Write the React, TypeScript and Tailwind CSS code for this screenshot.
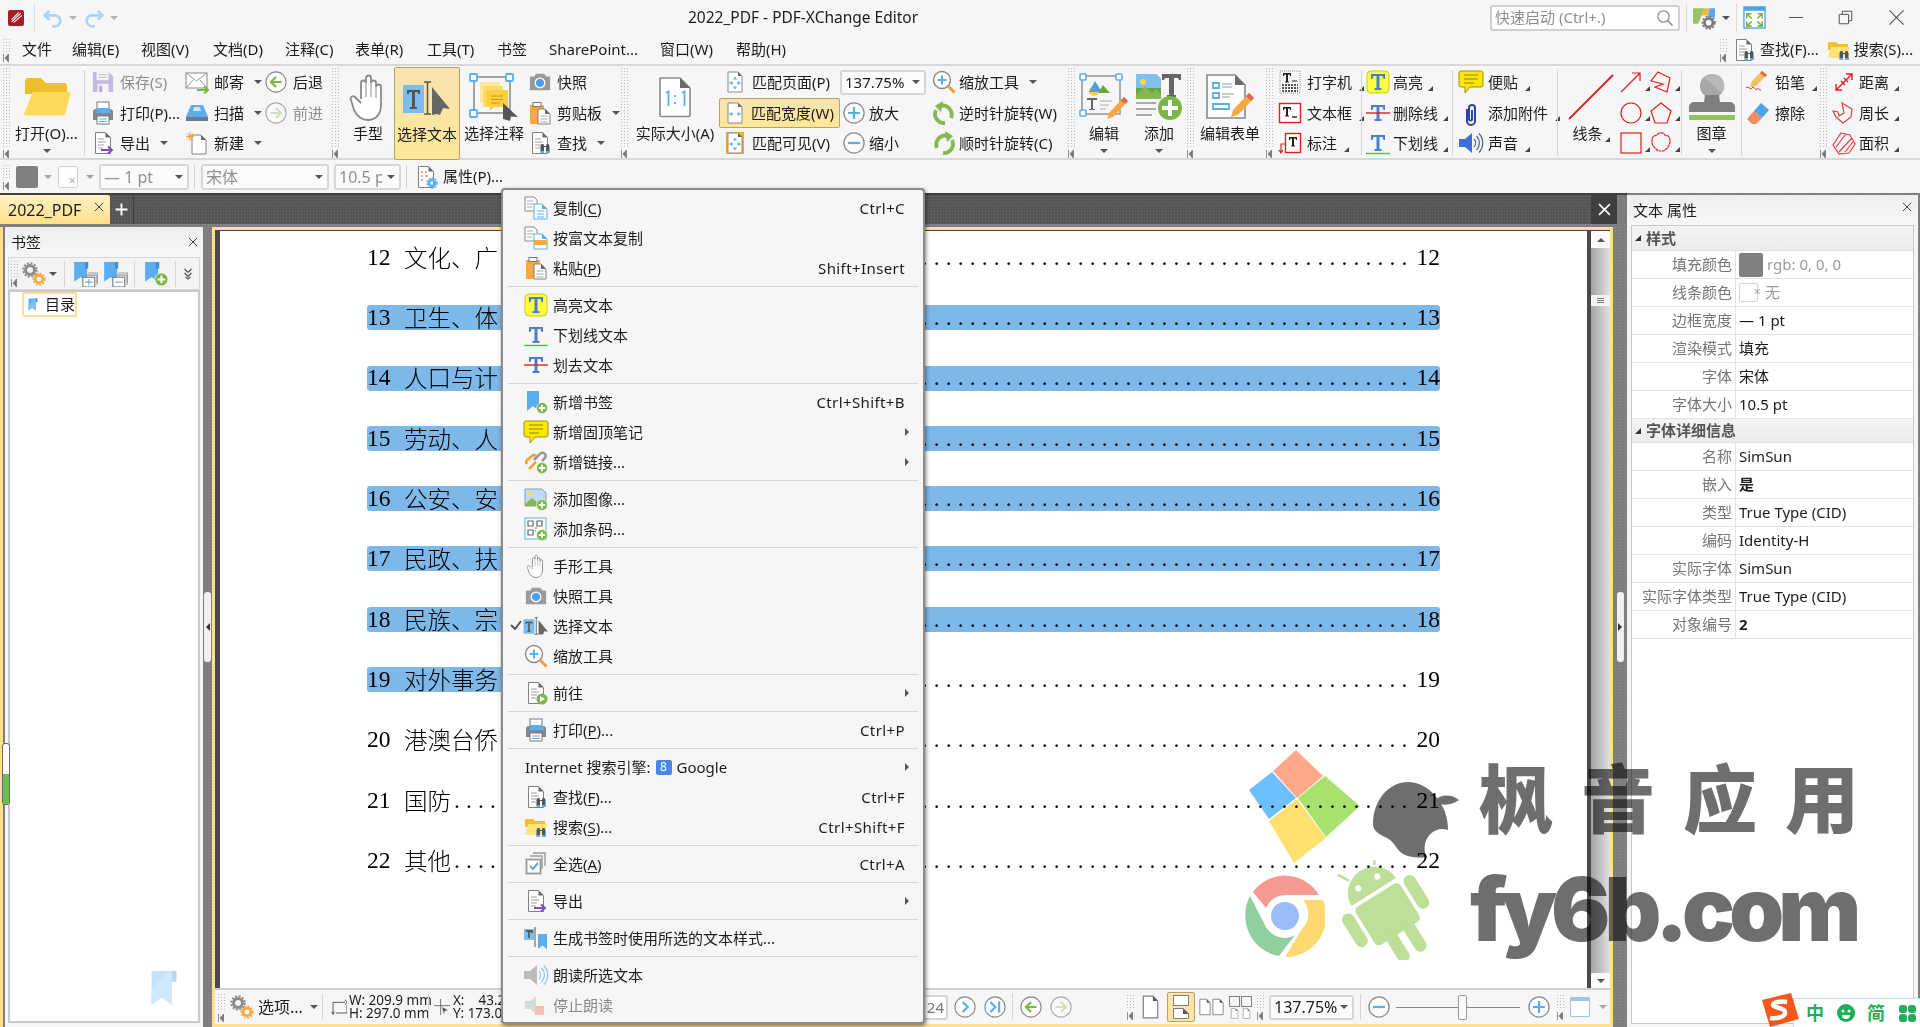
import type { ReactNode } from "react";

const BLUE = "#5aaef0";
const GREEN = "#7ab648";

function I({ c, v = "0 0 24 24", children }: { c: string; v?: string; children: ReactNode }) {
  return (
    <svg viewBox={v} className={`shrink-0 ${c}`} fill="none">
      {children}
    </svg>
  );
}

const Caret = ({ c = "" }: { c?: string }) => (
  <svg viewBox="0 0 8 4" className={`h-[4px] w-[8px] shrink-0 ${c}`}>
    <path d="M0 0h8L4 4z" fill="#555" />
  </svg>
);

const Corner = () => (
  <svg viewBox="0 0 5 5" className="ml-[2px] mt-[12px] h-[5px] w-[5px] shrink-0">
    <path d="M5 0v5H0z" fill="#444" />
  </svg>
);

const Paper = ({ lines = true }: { lines?: boolean }) => (
  <>
    <path d="M4.500 1.500h10l5 5v16h-15z" fill="#fff" stroke="#808080" />
    <path d="M14.500 1.500l5 5h-5z" fill="#6a6a6a" />
    {lines && <path d="M7 8h6M7 11h8M7 14h6M7 17h5" stroke="#a0a0a0" />}
  </>
);

const Binoculars = () => (
  <g>
    <path d="M12.500 15l1-2h2l.5 2h2l.5-2h2l1 2v6h-3.500v-5h-2v5H12.500z" fill="#4d5560" />
    <path d="M12.500 21h3.500M18 21h4" stroke={BLUE} strokeWidth="1.800" />
  </g>
);

const PlusBadge = ({ x = 18, y = 18, r = 5.500 }: { x?: number; y?: number; r?: number }) => (
  <g>
    <circle cx={x} cy={y} r={r} fill={GREEN} stroke="#fff" strokeWidth=".6" />
    <path d={`M${x - r * 0.6} ${y}h${r * 1.2}M${x} ${y - r * 0.6}v${r * 1.2}`} stroke="#fff" strokeWidth="1.800" />
  </g>
);

const DocFind = () => (
  <I c="h-[24px] w-[24px]">
    <Paper />
    <Binoculars />
  </I>
);
const FolderFind = () => (
  <I c="h-[24px] w-[24px]">
    <path d="M1 4h8l2 2h10v6H1z" fill="#f0c030" />
    <path d="M4 9h19l-3 11H1z" fill="#ffe27a" />
    <Binoculars />
  </I>
);
const DocExport = () => (
  <I c="h-[24px] w-[24px]">
    <Paper />
    <path d="M10 19h11M17 15.500l4 3.500-4 3.500" stroke="#7a50c0" strokeWidth="2" />
  </I>
);
const Floppy = () => (
  <I c="h-[22px] w-[22px]">
    <path d="M1 1h17l5 5v17H1z" fill="#c6b6e2" />
    <rect x="5" y="1" width="13" height="9" fill="#f4f4f4" />
    <rect x="6" y="14" width="12" height="9" fill="#f4f4f4" />
    <rect x="8" y="16" width="3" height="7" fill="#b5a2d8" />
    <path d="M7 4h9M7 7h9" stroke="#bbb" />
  </I>
);
const Printer = () => (
  <I c="h-[24px] w-[24px]">
    <rect x="6" y="1" width="12" height="8" fill="#fff" stroke="#777" />
    <path d="M2 11a3 3 0 0 1 3-3h14a3 3 0 0 1 3 3v8H2z" fill="#7d8894" />
    <path d="M6 7h12l2.500 5h-15z" fill={BLUE} />
    <rect x="6" y="15" width="12" height="8" fill="#fff" stroke="#777" />
    <path d="M8 18h8M8 20.500h8" stroke={BLUE} />
  </I>
);
const Mail = () => (
  <I c="h-[24px] w-[24px]">
    <rect x="1" y="3" width="21" height="15" fill="#fff" stroke="#888" />
    <path d="M1 3l10.500 8L22 3M1 18l7-8M22 18l-7-8" stroke="#999" />
    <path d="M12 20h11M19 16.500l4 3.500-4 3.500" stroke={GREEN} strokeWidth="2" />
  </I>
);
const Scan = () => (
  <I c="h-[24px] w-[24px]">
    <path d="M6 4h12l5 12H1z" fill={BLUE} />
    <path d="M9 6h6l1 4H8z" fill="#cfe8fb" />
    <rect x="1" y="16" width="22" height="4" fill="#6d7c8a" />
  </I>
);
const NewDoc = () => (
  <I c="h-[24px] w-[24px]" v="0 0 24 24">
    <path d="M7 4h9l5 5v14H7z" fill="#fff" stroke="#808080" />
    <path d="M16 4l5 5h-5z" fill="#6a6a6a" />
    <path d="M5 1v9M1 5.500h8M2 2.500l6 6M8 2.500l-6 6" stroke="#f5a030" />
  </I>
);
const CircleArrow = ({ dir, off }: { dir: "l" | "r"; off?: boolean }) => {
  const col = off ? "#bcdaa0" : GREEN;
  return (
    <I c={off ? "h-[22px] w-[22px] opacity-70" : "h-[22px] w-[22px]"}>
      <circle cx="12" cy="12" r="11" fill="#fbfbfb" stroke="#8a8a8a" strokeWidth="1.200" />
      <path d={dir === "l" ? "M18 12H7M12 6.500L6.500 12l5.500 5.500" : "M6 12h11M12 6.500l5.500 5.500-5.500 5.500"} stroke={col} strokeWidth="2.400" />
    </I>
  );
};
const CircleNav = ({ end }: { end?: boolean }) => (
  <I c="h-[22px] w-[22px]">
    <circle cx="12" cy="12" r="11" fill="#fbfbfb" stroke="#8a8a8a" strokeWidth="1.200" />
    <path d={end ? "M7 6.500l5.500 5.500L7 17.500M16.500 6v12" : "M9.500 6.500L15 12l-5.500 5.500"} stroke={BLUE} strokeWidth="2.400" />
  </I>
);
const CircleSign = ({ plus }: { plus?: boolean }) => (
  <I c="h-[22px] w-[22px]">
    <circle cx="12" cy="12" r="11" fill="#fbfbfb" stroke="#8a8a8a" strokeWidth="1.400" />
    <path d={plus ? "M5.500 12h13M12 5.500v13" : "M5.500 12h13"} stroke={BLUE} strokeWidth="2.400" />
  </I>
);
const Hand = ({ c = "h-[48px] w-[38px]" }: { c?: string }) => (
  <I c={c} v="0 0 38 48">
    <path
      d="M12 26V10a2.500 2.500 0 0 1 5 0V5a2.500 2.500 0 0 1 5 0v5a2.500 2.500 0 0 1 5 0v4a2.500 2.500 0 0 1 5 0v18c0 9-5 15-13 15-7 0-11-4-14-10L2 27c-1.500-3 2-5 4-3l6 6"
      fill="#fff"
      stroke="#8a8a8a"
      strokeWidth="1.800"
    />
    <path d="M17 10v14M22 10v14M27 14v11" stroke="#8a8a8a" />
  </I>
);
const SelectText = ({ c = "h-[36px] w-[50px]" }: { c?: string }) => (
  <I c={c} v="0 0 50 36">
    <rect x="1" y="5" width="21" height="28" rx="1" fill="#7dbcf0" />
    <path d="M5 10h13v4h-1.500l-1-2h-2.500v15h2v2H8v-2h2V12H7.500l-1 2H5z" fill="#555" />
    <path d="M22 2h7M25.500 2v32M22 34h7" stroke="#555" strokeWidth="1.500" />
    <path d="M30 7l18 22-7-1-3 7-3-1-5 1z" fill="#666" />
  </I>
);
const SelectAnnot = () => (
  <I c="h-[48px] w-[50px]" v="0 0 50 48">
    <rect x="5" y="4" width="36" height="36" fill="none" stroke="#999" strokeWidth="1.800" />
    <rect x="1" y="1" width="7" height="7" rx="1" fill="#fff" stroke={BLUE} strokeWidth="1.800" />
    <rect x="37" y="1" width="7" height="7" rx="1" fill="#fff" stroke={BLUE} strokeWidth="1.800" />
    <rect x="1" y="37" width="7" height="7" rx="1" fill="#fff" stroke={BLUE} strokeWidth="1.800" />
    <path d="M11 9h20v6H17v15h-6z" fill="#ffe89a" />
    <path d="M14 13h20v6H20v15h-6z" fill="#ffda6a" />
    <path d="M17 17h22v17H25l-4 4v-4h-4z" fill="#ffcf40" />
    <path d="M22 23h12M22 26.500h12M22 30h9" stroke="#c99a10" />
    <path d="M34 30l15 14-7-.5-1 4.500-3-1-4-1z" fill="#555" />
  </I>
);
const Camera = ({ c = "h-[22px] w-[24px]" }: { c?: string }) => (
  <I c={c}>
    <path d="M1 6h5l1.500-3h9L19 6h4v15H1z" fill="#9a9a9a" />
    <circle cx="12" cy="13" r="6" fill="#fff" />
    <circle cx="12" cy="13" r="4.500" fill="#4a9ff0" />
  </I>
);
const Clipboard = () => (
  <I c="h-[26px] w-[24px]">
    <path d="M2 4h14v19H2z" fill="#f9a840" />
    <rect x="5" y="1.500" width="8" height="4" fill="#fff" stroke="#777" />
    <path d="M10 8h7l5 5v10H10z" fill="#fff" stroke="#808080" />
    <path d="M17 8l5 5h-5z" fill="#6a6a6a" />
    <path d="M12.500 15h7M12.500 18h7M12.500 21h7" stroke="#aaa" />
  </I>
);
const Find2 = () => (
  <I c="h-[26px] w-[24px]">
    <Paper />
    <Binoculars />
  </I>
);
const OneToOne = () => (
  <I c="h-[42px] w-[34px]" v="0 0 34 42">
    <path d="M2 2h20l10 10v27a1.500 1.500 0 0 1-1.500 1.500h-27A1.500 1.500 0 0 1 2 39z" fill="#fff" stroke="#8a8a8a" strokeWidth="1.600" />
    <path d="M22 2l10 10H22z" fill="#6a6a6a" />
    <path d="M8 17l2.500-1.500V30M17 19v2M17 26v2M24 17l2.500-1.500V30" stroke={BLUE} strokeWidth="1.800" />
  </I>
);
const FitDoc = ({ kind }: { kind: "page" | "width" | "vis" }) => (
  <I c="h-[24px] w-[20px]" v="0 0 20 24">
    {kind === "vis" && <rect x="1" y="1" width="18" height="22" fill="#f9a840" />}
    <path d="M3 2h10l4 4v16H3z" fill="#fff" stroke="#888" />
    <path d="M13 2l4 4h-4z" fill="#6a6a6a" />
    <path d="M6 13H4M8 13l-2-1.500v3zM14 13h2M12 13l2-1.500v3z" stroke={BLUE} />
    {kind !== "width" && <path d="M10 8v2M10 16v2M8.500 9.500L10 7l1.500 2.500M8.500 16.500L10 19l1.500-2.500" stroke={BLUE} />}
  </I>
);
const ZoomTool = ({ c = "h-[24px] w-[24px]" }: { c?: string }) => (
  <I c={c}>
    <circle cx="10" cy="10" r="8.500" fill="#fff" stroke="#8a8a8a" strokeWidth="1.400" />
    <path d="M5.500 10h9M10 5.500v9" stroke={BLUE} strokeWidth="2" />
    <path d="M16 16l6.500 6.500" stroke="#f5a030" strokeWidth="3" />
  </I>
);
const Rotate = ({ cw }: { cw?: boolean }) => (
  <I c={cw ? "h-[24px] w-[24px]" : "h-[24px] w-[24px] -scale-x-100"}>
    <path d="M5 17a9 9 0 0 1 11-12" stroke="#85b84f" strokeWidth="3.800" />
    <path d="M13 0l8 5-6 6z" fill="#85b84f" />
    <path d="M20 9a9 9 0 0 1-9 13" stroke="#85b84f" strokeWidth="3.800" />
  </I>
);
const EditBox = () => (
  <I c="h-[48px] w-[50px]" v="0 0 50 48">
    <rect x="3" y="3" width="38" height="38" stroke="#999" strokeWidth="1.600" />
    <rect x="1" y="1" width="6" height="6" rx="1" fill="#fff" stroke={BLUE} strokeWidth="1.600" />
    <rect x="37" y="1" width="6" height="6" rx="1" fill="#fff" stroke={BLUE} strokeWidth="1.600" />
    <rect x="1" y="37" width="6" height="6" rx="1" fill="#fff" stroke={BLUE} strokeWidth="1.600" />
    <circle cx="15" cy="18" r="5" fill="#f7cf50" />
    <path d="M16 8l7 11h-13z" fill="#4f9ee8" />
    <path d="M24 12l7 8H19z" fill="#6aa640" />
    <path d="M8 25h10v2h-4v9h2v1H10v-1h2v-9H8z" fill="#666" />
    <path d="M21 28h12M21 32h9M21 36h6" stroke="#aaa" />
    <path d="M45 24l4 4-15 16-6 2 2-6z" fill="#f7a840" />
    <path d="M45 24l4 4-3 3-4-4z" fill="#e06650" />
  </I>
);
const AddBox = () => (
  <I c="h-[48px] w-[48px]" v="0 0 48 48">
    <path d="M1 1h20l5 5v20H1z" fill="#6aa640" />
    <path d="M1 1h20l5 5v9H1z" fill="#7dc0f0" />
    <circle cx="8" cy="9" r="3" fill="#ffd84a" />
    <path d="M1 22l9-9 7 7 4-4 5 6v4H1z" fill="#86b850" />
    <path d="M27 1h19v6h-2l-1-2h-4v17h2v2H32v-2h2V5h-4l-1 2h-2z" fill="#666" />
    <path d="M1 30h20M1 36h20M1 42h16" stroke="#aaa" strokeWidth="2" />
    <circle cx="35" cy="35" r="12" fill={GREEN} />
    <path d="M27 35h16M35 27v16" stroke="#fff" strokeWidth="4" />
  </I>
);
const FormEdit = () => (
  <I c="h-[48px] w-[50px]" v="0 0 50 48">
    <path d="M2 2h28l10 10v33H2z" fill="#fff" stroke="#888" strokeWidth="1.600" />
    <path d="M30 2l10 10H30z" fill="#6a6a6a" />
    <path d="M8 10h6v5H8zM8 20h6v5H8z" stroke={BLUE} strokeWidth="1.800" />
    <path d="M8 31h16v5H8z" stroke={BLUE} strokeWidth="1.800" />
    <path d="M17 11h10M17 14h10M17 21h12M17 24h8" stroke="#999" />
    <path d="M44 20l5 5-16 17-7 2 2-7z" fill="#f7a840" />
    <path d="M44 20l5 5-3 3-5-5z" fill="#e06650" />
  </I>
);
const SerifT = () => (
  <path d="M5 4h14v5h-1.500l-1-3h-3v12h2v2H8.500v-2h2V6h-3l-1 3H5z" fill="#4a7fd0" />
);
const Typewriter = () => (
  <I c="h-[24px] w-[24px]">
    <rect x="2" y="1" width="20" height="22" stroke="#999" strokeDasharray="1 1" />
    <path d="M5 3h8v3h-1l-.5-1.500H10v7h1v1H7v-1h1v-7H6.500L6 6H5z" fill="#222" />
    <path d="M14 11h5" stroke="#222" />
    <path d="M4 15h16M4 18h16M4 21h16" stroke="#555" strokeWidth="2" strokeDasharray="2 1" />
  </I>
);
const TextBox = () => (
  <I c="h-[24px] w-[24px]">
    <rect x="1.500" y="2.500" width="21" height="19" fill="#fff" stroke="#e02020" strokeWidth="1.400" />
    <path d="M5 6h8v3h-1l-.5-1.500H10v7h1v1H7v-1h1v-7H6.500L6 9H5z" fill="#222" />
    <path d="M14 16h5" stroke="#222" strokeWidth="1.400" />
  </I>
);
const Callout = () => (
  <I c="h-[24px] w-[24px]">
    <rect x="7.500" y="2.500" width="15" height="19" fill="#fff" stroke="#e02020" strokeWidth="1.400" />
    <path d="M11 6h8v3h-1l-.5-1.500H16v7h1v1h-4v-1h1v-7h-1.500L12 9h-1z" fill="#222" />
    <path d="M8 13H3v9M1 19l2 3 2-3" stroke="#e02020" strokeWidth="1.200" />
  </I>
);
const HighlightT = () => (
  <I c="h-[24px] w-[24px]">
    <rect x="1" y="1" width="22" height="22" rx="4" fill="#ffff40" stroke="#c8c820" />
    <SerifT />
  </I>
);
const StrikeT = () => (
  <I c="h-[24px] w-[24px]">
    <SerifT />
    <path d="M0 12h24" stroke="#e02020" strokeWidth="1.400" />
  </I>
);
const UnderT = () => (
  <I c="h-[24px] w-[24px]">
    <SerifT />
    <path d="M0 22.500h24" stroke="#30d040" strokeWidth="1.400" />
  </I>
);
const Note = () => (
  <I c="h-[24px] w-[26px]" v="0 0 26 24">
    <path d="M3 1h20a2 2 0 0 1 2 2v12a2 2 0 0 1-2 2H12l-5 6v-6H3a2 2 0 0 1-2-2V3a2 2 0 0 1 2-2z" fill="#ffe600" stroke="#99911a" />
    <path d="M6 5h14M6 9h14M6 13h10" stroke="#8a8410" />
  </I>
);
const Clip = () => (
  <I c="h-[28px] w-[24px]">
    <path d="M8 7v12a4 4 0 0 0 8 0V6a3 3 0 0 0-6 0v11a1.500 1.500 0 0 0 3 0V8" stroke="#2a45a8" strokeWidth="2" transform="translate(0 1)" />
  </I>
);
const Sound = ({ off }: { off?: boolean }) => (
  <I c="h-[24px] w-[26px]" v="0 0 26 24">
    <path d="M1 8h6l7-6v20l-7-6H1z" fill={off ? "#bbb" : "#3f6fd8"} />
    <path d="M16 8a6 6 0 0 1 0 8M18.500 5a10 10 0 0 1 0 14M21 2.500a14 14 0 0 1 0 19" stroke={off ? "#8ac4f4" : "#4a5a90"} strokeWidth="1.200" />
  </I>
);
const Stamp = () => (
  <I c="h-[48px] w-[46px]" v="0 0 46 48">
    <circle cx="23" cy="13" r="12" fill="#a8a8a8" />
    <path d="M23 1a12 12 0 0 1 10 19L15 4a12 12 0 0 1 8-3z" fill="#b8b8b8" />
    <path d="M16 22h14l1 7h10a5 5 0 0 1 5 5v5H0v-5a5 5 0 0 1 5-5h10z" fill="#808080" />
    <rect x="0" y="42" width="46" height="5" rx="1" fill="#8fc45a" />
  </I>
);
const Pencil = () => (
  <I c="h-[24px] w-[26px]" v="0 0 26 24">
    <path d="M17 1l5 4-11 11-6 1 2-6z" fill="#f7c060" />
    <path d="M17 1l5 4-2 2-5-4z" fill="#e06650" />
    <path d="M1 18c3-3 4 3 6 0s3 3 5 1 2 2 4 1" stroke="#e02020" />
  </I>
);
const Eraser = () => (
  <I c="h-[24px] w-[26px]" v="0 0 26 24">
    <path d="M16 2l8 7-7 8-8-7z" fill="#4da3ea" />
    <path d="M9 10l8 7-6 6H7l-5-5z" fill="#f08a60" />
  </I>
);
const Measure = ({ kind }: { kind: "d" | "p" | "a" }) => (
  <I c="h-[24px] w-[24px]">
    {kind === "d" && <path d="M4 20L20 4M14 4h6v6M4 14v6h6M9 11l4 4M12 8l4 4" stroke="#e02020" strokeWidth="1.400" />}
    {kind === "p" && <path d="M10 2l10 6-1 8-8 6-7-6-3-6 5 1 1 4 5-3z" stroke="#e04040" strokeWidth="1.200" />}
    {kind === "a" && (
      <>
        <path d="M9 2l9 2 5 9-6 9-10 1-6-9z" stroke="#e04040" strokeWidth="1.200" />
        <path d="M4 16L14 3M7 21L20 7M13 21l8-10" stroke="#e04040" strokeWidth="1.200" />
      </>
    )}
  </I>
);
const Shape = ({ kind }: { kind: string }) => (
  <I c="h-[24px] w-[24px]">
    <g stroke="#e81818" strokeWidth="1.200">
      {kind === "arrow" && <path d="M2 22L21 3M13 3h8v8" />}
      {kind === "poly" && <path d="M9 2l12 6-3 14-12-5 8-3-12-3z" />}
      {kind === "circle" && <circle cx="12" cy="12" r="10" />}
      {kind === "penta" && <path d="M12 2l10 8-4 12H6L2 10z" />}
      {kind === "rect" && <rect x="2" y="2" width="20" height="20" />}
      {kind === "cloud" && <path d="M12 2c2-1 3 1 4 2s3 0 4 2 1 3 1 5-1 3-2 5-2 2-3 3-3 1-4 1-3 0-4-1-2-2-3-3-2-3-2-5 0-3 1-5 3-1 4-2 2-3 4-2z" strokeDasharray="3 .5" />}
    </g>
  </I>
);
const Gear = ({ c = "h-[26px] w-[26px]" }: { c?: string }) => (
  <I c={c}>
    <circle cx="8" cy="8" r="4.500" stroke="#8a8a8a" strokeWidth="3" />
    <circle cx="8" cy="8" r="6.800" stroke="#8a8a8a" strokeWidth="1.800" strokeDasharray="2 1.600" />
    <circle cx="17" cy="17" r="3.800" stroke="#f9a840" strokeWidth="2.600" />
    <circle cx="17" cy="17" r="5.800" stroke="#f9a840" strokeWidth="1.600" strokeDasharray="2 1.400" />
  </I>
);
const Bookmark = ({ c = "h-[24px] w-[18px]" }: { c?: string }) => (
  <I c={c} v="0 0 18 24">
    <path d="M1 1h13v22l-6.500-5L1 23z" fill={BLUE} />
    <path d="M13 1h4v7h-4z" fill="#3e8fd8" />
    <path d="M1 23V13L12 1h2v22l-6.500-5z" fill="#7cc0f5" />
  </I>
);
const BookmarkAction = ({ kind }: { kind: "exp" | "col" | "add" }) => (
  <I c="h-[26px] w-[26px]">
    <path d="M2 1h12v18l-6-4-6 4z" fill={BLUE} />
    <path d="M12 1h3v6h-3z" fill="#3e8fd8" />
    {kind === "add" ? (
      <PlusBadge x={17} y={17} r={6} />
    ) : (
      <>
        <path d="M13 13h10v9M15 11h9v9" stroke="#999" />
        <rect x="10" y="15" width="11" height="9" fill="#fff" stroke="#777" />
        <path d={kind === "exp" ? "M12 19.500h7M15.500 16.500v6" : "M12 19.500h7"} stroke={BLUE} />
      </>
    )}
  </I>
);

const Grip = ({ bottom = true, c = "h-full" }: { bottom?: boolean; c?: string }) => (
  <div className={`flex w-[9px] shrink-0 flex-col ${c}`}>
    <div className="min-h-0 flex-1 bg-[radial-gradient(#bdbdbd_0.7px,transparent_0.9px)] bg-[length:3px_3px]" />
    {bottom && (
      <svg viewBox="0 0 6 8" className="ml-[1px] mt-[2px] h-[8px] w-[6px]">
        <path d="M.5 0v8M5.500 0v8L2 4z" stroke="#777" fill="#777" strokeWidth=".8" />
      </svg>
    )}
  </div>
);
const VSep = () => <div className="mx-[2px] my-[3px] w-px shrink-0 bg-[#d4d4d4]" />;

function Row({
  icon,
  text,
  gap = "gap-[5px]",
  dim,
  caret,
  corner,
}: {
  icon?: ReactNode;
  text: ReactNode;
  gap?: string;
  dim?: boolean;
  caret?: string;
  corner?: boolean;
}) {
  return (
    <div className={`flex h-[30.500px] items-center whitespace-nowrap ${gap} ${dim ? "text-[#8e8e8e]" : ""}`}>
      <div className="flex w-[24px] shrink-0 justify-center">{icon}</div>
      <span>{text}</span>
      {caret && <Caret c={caret} />}
      {corner && <Corner />}
    </div>
  );
}

function Big({
  w,
  icon,
  label,
  caret,
  corner,
  active,
}: {
  w: string;
  icon: ReactNode;
  label: string;
  caret?: boolean;
  corner?: boolean;
  active?: boolean;
}) {
  return (
    <div
      className={`flex h-[93px] shrink-0 flex-col items-center whitespace-nowrap ${w} ${
        active ? "rounded-[2px] border border-[#b7a263] bg-linear-to-b from-[#f6e3b0] to-[#ffe797]" : ""
      }`}
    >
      <div className="flex h-[56px] items-center justify-center pt-[3px]">{icon}</div>
      <div className="flex h-[20px] items-center leading-none">
        {label}
        {corner && <Corner />}
      </div>
      {caret && <Caret c="mt-[6px]" />}
    </div>
  );
}

function Combo({ text, w, dim, h = "h-[26px]", c = "" }: { text: string; w: string; dim?: boolean; h?: string; c?: string }) {
  return (
    <div
      className={`flex shrink-0 items-center justify-between overflow-hidden rounded-[3px] border-2 border-[#d6d6d6] bg-[#fbfbfb] pl-[3px] pr-[4px] whitespace-nowrap ${w} ${h} ${c} ${
        dim ? "text-[#8e8e8e]" : ""
      }`}
    >
      <span className="overflow-hidden">{text}</span>
      <Caret c="ml-[1px]" />
    </div>
  );
}

function Ribbon() {
  return (
    <div className="flex h-[94px] border-b-2 border-[#d8d8d8] pt-[1px]">
      <div className="w-[2px] shrink-0" />
      <Grip />
      <Big w="w-[71px]" label="打开(O)..." caret icon={
        <I c="h-[38px] w-[48px]" v="0 0 48 38">
          <path d="M4 0h14l5 5h18a3 3 0 0 1 3 3v8H2V2z" fill="#efbf2b" />
          <path d="M10 14h36a1.500 1.500 0 0 1 1.500 2L42 36a2 2 0 0 1-2 1.500H3a2 2 0 0 1-2-2z" fill="#ffd95a" />
        </I>
      } />
      <VSep />
      <div className="ml-[4px] w-[94px] shrink-0">
        <Row dim icon={<Floppy />} text="保存(S)" />
        <Row icon={<Printer />} text="打印(P)..." />
        <Row icon={<DocExport />} text="导出" caret="ml-[5px]" />
      </div>
      <div className="w-[79px] shrink-0">
        <Row icon={<Mail />} text="邮寄" caret="ml-[5px]" />
        <Row icon={<Scan />} text="扫描" caret="ml-[5px]" />
        <Row icon={<NewDoc />} text="新建" caret="ml-[5px]" />
      </div>
      <div className="w-[66px] shrink-0">
        <Row icon={<CircleArrow dir="l" />} text="后退" />
        <Row dim icon={<CircleArrow dir="r" off />} text="前进" />
      </div>
      <div className="ml-[1px] mr-[5px] flex"><Grip /></div>
      <Big w="w-[46px]" label="手型" icon={<Hand />} />
      <Big w="w-[66px] ml-[3px]" label="选择文本" active icon={<SelectText />} />
      <Big w="w-[68px]" label="选择注释" icon={<SelectAnnot />} />
      <div className="w-[92px] shrink-0">
        <Row icon={<Camera />} text="快照" />
        <Row icon={<Clipboard />} text="剪贴板" caret="ml-[5px]" />
        <Row icon={<Find2 />} text="查找" caret="ml-[5px]" />
      </div>
      <Grip />
      <div className="w-[3px] shrink-0" />
      <Big w="w-[86px]" label="实际大小(A)" icon={<OneToOne />} />
      <div className="w-[121px] shrink-0 pl-[5px] ">
        <Row icon={<FitDoc kind="page" />} text="匹配页面(P)" />
        <div className="-ml-[4px] -mr-[1px] flex h-[30.500px] items-center gap-[4px] rounded-[2px] border border-[#b7a263] bg-linear-to-b from-[#f6e3b0] to-[#ffe797] pl-[3px] whitespace-nowrap">
          <div className="flex w-[24px] justify-center"><FitDoc kind="width" /></div>
          <span>匹配宽度(W)</span>
        </div>
        <Row icon={<FitDoc kind="vis" />} text="匹配可见(V)" />
      </div>
      <div className="w-[92px] shrink-0 pl-[1px]">
        <div className="flex h-[30.500px] items-center"><Combo text="137.75%" w="w-[86px]" h="h-[25px]" /></div>
        <div className="ml-[2px]">
          <Row icon={<CircleSign plus />} text="放大" gap="gap-[3px]" />
          <Row icon={<CircleSign />} text="缩小" gap="gap-[3px]" />
        </div>
      </div>
      <div className="w-[136px] shrink-0 pl-[1px]">
        <Row icon={<ZoomTool />} text="缩放工具" gap="gap-[3px]" caret="ml-[7px]" />
        <Row icon={<Rotate />} text="逆时针旋转(W)" gap="gap-[3px]" />
        <Row icon={<Rotate cw />} text="顺时针旋转(C)" gap="gap-[3px]" />
      </div>
      <Grip />
      <Big w="w-[56px]" label="编辑" caret icon={<EditBox />} />
      <Big w="w-[54px]" label="添加" caret icon={<AddBox />} />
      <Grip />
      <Big w="w-[70px]" label="编辑表单" icon={<FormEdit />} />
      <Grip />
      <div className="w-[85px] shrink-0 pl-[4px]">
        <Row icon={<Typewriter />} text="打字机" corner />
        <Row icon={<TextBox />} text="文本框" corner />
        <Row icon={<Callout />} text="标注" corner />
      </div>
      <VSep />
      <div className="w-[86px] shrink-0 pl-[2px]">
        <Row icon={<HighlightT />} text="高亮" gap="gap-[3px]" corner />
        <Row icon={<StrikeT />} text="删除线" gap="gap-[3px]" corner />
        <Row icon={<UnderT />} text="下划线" gap="gap-[3px]" corner />
      </div>
      <VSep />
      <div className="w-[100px] shrink-0 pl-[4px]">
        <Row icon={<Note />} text="便贴" corner />
        <Row icon={<Clip />} text="添加附件" corner />
        <Row icon={<Sound />} text="声音" corner />
      </div>
      <VSep />
      <Big w="w-[59px] pl-[3px]" label="线条" corner icon={
        <I c="h-[46px] w-[46px]" v="0 0 46 46">
          <path d="M1 45L45 1" stroke="#e81818" strokeWidth="1.800" />
        </I>
      } />
      <div className="grid w-[60px] shrink-0 grid-cols-2 content-start">
        {["arrow", "poly", "circle", "penta", "rect", "cloud"].map((k) => (
          <div key={k} className="flex h-[30.500px] items-center">
            <Shape kind={k} />
            <Corner />
          </div>
        ))}
      </div>
      <VSep />
      <Big w="w-[55px]" label="图章" caret icon={<Stamp />} />
      <VSep />
      <div className="w-[75px] shrink-0 pl-[2px]">
        <Row icon={<Pencil />} text="铅笔" corner />
        <Row icon={<Eraser />} text="擦除" />
      </div>
      <Grip />
      <div className="shrink-0 pl-[4px]">
        <Row icon={<Measure kind="d" />} text="距离" gap="gap-[3px]" corner />
        <Row icon={<Measure kind="p" />} text="周长" gap="gap-[3px]" corner />
        <Row icon={<Measure kind="a" />} text="面积" gap="gap-[3px]" corner />
      </div>
    </div>
  );
}

function TopBars() {
  const menus = [
    ["文件", "w-[50px]"],
    ["编辑(E)", "w-[69px]"],
    ["视图(V)", "w-[72px]"],
    ["文档(D)", "w-[72px]"],
    ["注释(C)", "w-[70px]"],
    ["表单(R)", "w-[72px]"],
    ["工具(T)", "w-[70px]"],
    ["书签", "w-[52px]"],
    ["SharePoint...", "w-[111px]"],
    ["窗口(W)", "w-[76px]"],
    ["帮助(H)", "w-[80px]"],
  ];
  return (
    <>
      <div className="relative flex h-[35px] items-center">
        <div className="ml-[8px] flex h-[16px] w-[16px] items-center justify-center rounded-[2px] bg-[#a81c24]">
          <I c="h-[13px] w-[13px]">
            <path d="M3 20L20 4M7 21L22 8M3 16L16 3" stroke="#fff" strokeWidth="2" />
          </I>
        </div>
        <div className="ml-[10px] h-[28px] w-px bg-[#dcdcdc]" />
        <I c="ml-[7px] h-[22px] w-[22px]">
          <path d="M8 4L3 9l5 5M3 9h11a6 6 0 0 1 0 12h-3" stroke="#a9d6f7" strokeWidth="3" />
        </I>
        <Caret c="ml-[5px] opacity-40" />
        <I c="ml-[6px] h-[22px] w-[22px]">
          <path d="M16 4l5 5-5 5M21 9H10a6 6 0 0 0 0 12h3" stroke="#a9d6f7" strokeWidth="3" />
        </I>
        <Caret c="ml-[5px] opacity-40" />
        <div className="absolute left-[688px] top-[6px] text-[15.500px]">2022_PDF - PDF-XChange Editor</div>
        <div className="ml-[1372px] flex h-[26px] w-[190px] items-center justify-between rounded-[3px] border-2 border-[#cfcfcf] bg-white pl-[3px] pr-[4px] text-[#8e8e8e]">
          <span>快速启动 (Ctrl+.)</span>
          <I c="h-[18px] w-[18px]">
            <circle cx="10" cy="10" r="7.500" stroke="#8a8a8a" strokeWidth="1.600" />
            <path d="M15 15l7 7" stroke="#8a8a8a" strokeWidth="2" />
          </I>
        </div>
        <div className="ml-[6px] h-[28px] w-px bg-[#dcdcdc]" />
        <I c="ml-[5px] h-[25px] w-[25px]">
          <path d="M1 3h11l-6 15H1z" fill="#9cc35f" />
          <path d="M12 3h5l-2 7h-6z" fill="#f7b53f" />
          <path d="M17 3h5v9h-7z" fill="#5aa6ee" />
          <circle cx="16" cy="17" r="4" stroke="#777" strokeWidth="2.500" />
          <circle cx="16" cy="17" r="6" stroke="#777" strokeWidth="1.500" strokeDasharray="2 1.500" />
        </I>
        <Caret c="ml-[5px]" />
        <div className="ml-[6px] h-[28px] w-px bg-[#dcdcdc]" />
        <I c="ml-[6px] h-[23px] w-[23px]">
          <rect x="1" y="1" width="22" height="22" fill="#fff" stroke="#4da3ea" strokeWidth="1.400" />
          <rect x="1" y="1" width="22" height="4" fill="#4da3ea" />
          <path d="M9 8L4 8v5M4 8l5 5M15 8h5v5M20 8l-5 5M9 21H4v-5M4 21l5-5M15 21h5v-5M20 21l-5-5" stroke="#7ab648" strokeWidth="1.600" />
        </I>
        <div className="ml-[23px] h-px w-[14px] bg-[#555]" />
        <I c="ml-[35px] h-[15px] w-[15px]">
          <path d="M2 7h15v15H2zM7 7V2h15v15h-5" stroke="#555" strokeWidth="1.600" />
        </I>
        <I c="ml-[35px] h-[17px] w-[17px]">
          <path d="M2 2l20 20M22 2L2 22" stroke="#555" strokeWidth="1.600" />
        </I>
      </div>
      <div className="flex h-[31px] items-center border-b-2 border-[#d8d8d8] pl-[2px]">
        <Grip c="h-[24px]" />
        <div className="w-[11px]" />
        {menus.map(([t, w]) => (
          <div key={t} className={`${w} shrink-0 whitespace-nowrap`}>{t}</div>
        ))}
        <div className="ml-[903px] mr-[4px] flex h-[24px]"><Grip /></div>
        <DocFind />
        <span className="ml-[4px] whitespace-nowrap">查找(F)...</span>
        <div className="ml-[8px]"><FolderFind /></div>
        <span className="ml-[3px] whitespace-nowrap">搜索(S)...</span>
      </div>
    </>
  );
}

function PropBar() {
  return (
    <div className="flex h-[33px] items-center pl-[2px]">
      <Grip c="h-[26px]" />
      <div className="ml-[5px] h-[22px] w-[22px] rounded-[2px] bg-[#808080]" />
      <Caret c="ml-[6px] opacity-50" />
      <div className="relative ml-[6px] h-[22px] w-[20px] rounded-[2px] border border-[#d4d4d4] bg-[#fdfdfd]">
        <span className="absolute bottom-0 right-[1px] text-[13px] leading-none text-[#aaa]">×</span>
      </div>
      <Caret c="ml-[8px] opacity-50" />
      <Combo text="— 1 pt" w="w-[90px] ml-[5px]" c="text-[16px]" dim />
      <div className="mx-[5px] h-[24px] w-px bg-[#d4d4d4]" />
      <Combo text="宋体" w="w-[128px] ml-[1px]" c="text-[16px]" dim />
      <Combo text="10.5 pt" w="w-[67px] ml-[5px]" c="text-[16px] [&>span]:w-[43px]" dim />
      <div className="ml-[5px] h-[24px] w-px bg-[#d4d4d4]" />
      <I c="ml-[7px] h-[24px] w-[24px]">
        <Paper lines={false} />
        <path d="M7 7h2M11 7h2M7 11h2M11 11h3M7 15h2" stroke="#e05030" />
        <circle cx="18" cy="18" r="3" stroke={BLUE} strokeWidth="2.400" />
        <circle cx="18" cy="18" r="5" stroke={BLUE} strokeWidth="1.400" strokeDasharray="2 1.200" />
      </I>
      <span className="ml-[5px] whitespace-nowrap">属性(P)...</span>
    </div>
  );
}

function TabBar() {
  return (
    <div className="flex h-[31px] shrink-0 items-stretch border-t-2 border-[#3e3e3e] bg-[#565656] bg-[radial-gradient(#686868_0.8px,transparent_1px)] bg-[length:3px_3px]">
      <div className="flex w-[110px] items-center justify-between rounded-tr-[2px] bg-linear-to-b from-[#fff0c4] to-[#ffdf8a] pl-[8px] pr-[6px]">
        <span className="text-[16px]">2022_PDF</span>
        <I c="mb-[6px] h-[10px] w-[10px]">
          <path d="M2 2l20 20M22 2L2 22" stroke="#222" strokeWidth="2" />
        </I>
      </div>
      <div className="flex w-[24px] items-center justify-center border-r border-[#3e3e3e]">
        <I c="h-[13px] w-[13px]">
          <path d="M12 1v22M1 12h22" stroke="#fff" strokeWidth="3.500" />
        </I>
      </div>
      <div className="flex-1" />
      <div className="flex w-[26px] items-center justify-center bg-[#3f3f3f]">
        <I c="h-[13px] w-[13px]">
          <path d="M2 2l20 20M22 2L2 22" stroke="#fff" strokeWidth="3" />
        </I>
      </div>
      <div className="w-[10px] bg-[#7d7d7d]" />
    </div>
  );
}

function BookmarksPanel() {
  const actions: Array<"exp" | "col"> = ["exp", "col"];
  return (
    <div className="flex w-[198px] shrink-0 flex-col rounded-t-[2px] bg-[#f5f5f5] pb-[4px]">
      <div className="flex h-[30px] shrink-0 items-center justify-between bg-linear-to-b from-[#eeeeee] to-[#f7f7f7] pl-[6px] pr-[5px]">
        <span>书签</span>
        <I c="h-[10px] w-[10px]">
          <path d="M2 2l20 20M22 2L2 22" stroke="#222" strokeWidth="2" />
        </I>
      </div>
      <div className="mx-[3px] flex h-[33px] shrink-0 items-center border border-[#d8d8d8] bg-[#f3f3f3]">
        <Grip c="h-[27px] ml-[1px]" />
        <Gear c="ml-[3px] h-[24px] w-[24px]" />
        <Caret c="ml-[3px]" />
        <div className="mx-[7px] h-[26px] w-px bg-[#d4d4d4]" />
        {actions.map((k) => (
          <div key={k} className="mr-[4px]"><BookmarkAction kind={k} /></div>
        ))}
        <div className="ml-[2px] mr-[8px] h-[26px] w-px bg-[#d4d4d4]" />
        <BookmarkAction kind="add" />
        <div className="mx-[6px] h-[26px] w-px bg-[#d4d4d4]" />
        <I c="h-[12px] w-[12px]">
          <path d="M5 2l7 7 7-7M5 10l7 7 7-7M7 18l5 4 5-4" stroke="#555" strokeWidth="2.400" />
        </I>
      </div>
      <div className="relative mx-[3px] flex-1 border-2 border-[#c9c9c9] bg-white pl-[12px]">
        <div className="flex h-[25px] w-[55px] items-center gap-[7px] rounded-[2px] border-2 border-[#ffdf8f] pl-[4px]">
          <Bookmark c="h-[15px] w-[10px]" />
          <span>目录</span>
        </div>
        <div className="absolute bottom-[13px] right-[20px] opacity-35">
          <Bookmark c="h-[40px] w-[28px]" />
        </div>
      </div>
    </div>
  );
}

const rows: Array<{ n: number; t: string; sel?: boolean; part?: boolean; long?: boolean }> = [
  { n: 12, t: "文化、广" },
  { n: 13, t: "卫生、体", sel: true },
  { n: 14, t: "人口与计", sel: true },
  { n: 15, t: "劳动、人", sel: true },
  { n: 16, t: "公安、安", sel: true },
  { n: 17, t: "民政、扶", sel: true },
  { n: 18, t: "民族、宗", sel: true },
  { n: 19, t: "对外事务", part: true },
  { n: 20, t: "港澳台侨" },
  { n: 21, t: "国防", long: true },
  { n: 22, t: "其他", long: true },
];

function DocPage() {
  return (
    <div className="flex min-w-0 flex-1 flex-col gap-[35.300px] overflow-hidden bg-white px-[147px] pt-[14px] font-[Liberation_Serif,Noto_Sans_CJK_SC,serif] text-[23.500px] text-black">
      {rows.map((r) => (
        <div key={r.n} className={`flex h-[25px] shrink-0 items-center rounded-[3px] ${r.sel ? "bg-[#7db8e8]" : ""}`}>
          <div className={`flex h-full shrink-0 items-center rounded-l-[3px] ${r.part ? "w-[300px] bg-[#7db8e8]" : ""}`}>
            <span className="w-[37px]">{r.n}</span>
            <span className="font-[Noto_Sans_CJK_SC,sans-serif] font-light whitespace-nowrap">{r.t}</span>
          </div>
          <span className="ml-auto shrink-0 tracking-[6.120px] whitespace-nowrap">{".".repeat(r.long ? 80 : 41)}</span>
          <span className="shrink-0 pl-[3px]">{r.n}</span>
        </div>
      ))}
    </div>
  );
}

function ScrollBar() {
  return (
    <div className="flex w-[19px] shrink-0 flex-col bg-linear-to-r from-[#a4a4a4] to-[#e2e2e2]">
      <div className="flex h-[17px] items-center justify-center rounded-[1px] bg-[#fbfbfb]">
        <svg viewBox="0 0 8 4" className="h-[4px] w-[8px]"><path d="M0 4h8L4 0z" fill="#555" /></svg>
      </div>
      <div className="mt-[47px] flex h-[11px] flex-col items-center justify-center gap-[1px] rounded-[1px] bg-[#f4f4f4]">
        <div className="h-px w-[7px] bg-[#777]" />
        <div className="h-px w-[7px] bg-[#777]" />
        <div className="h-px w-[7px] bg-[#777]" />
      </div>
      <div className="flex-1" />
      <div className="flex h-[15px] items-center justify-center rounded-[1px] bg-[#fbfbfb]">
        <Caret />
      </div>
    </div>
  );
}

function StatusBar() {
  const Page1 = ({ c }: { c: string }) => (
    <svg viewBox="0 0 14 20" className={c}>
      <path d="M1 1h8l4 4v14H1z" fill="#fff" stroke="#808080" />
      <path d="M9 1l4 4H9z" fill="#555" />
    </svg>
  );
  return (
    <div className="flex h-[36px] shrink-0 items-center border-t-2 border-[#cfcfcf] bg-[#f6f6f6] pl-[2px] pr-[3px] whitespace-nowrap">
      <Grip c="h-[29px]" />
      <Gear c="ml-[4px] h-[24px] w-[24px]" />
      <span className="ml-[4px] text-[16px]">选项...</span>
      <Caret c="ml-[7px]" />
      <div className="ml-[4px] h-[26px] w-px bg-[#d4d4d4]" />
      <I c="ml-[8px] h-[16px] w-[16px]">
        <path d="M3 23V5h18M21 1l3 4-3 4M1 19l2 4 2-4M7 21h17V9" stroke="#555" strokeWidth="1.400" />
      </I>
      <div className="ml-[2px] w-[78px] text-[13.500px] leading-[13px]">
        <div>W: 209.9 mm</div>
        <div>H: 297.0 mm</div>
      </div>
      <div className="ml-[1px] h-[26px] w-px bg-[#d4d4d4]" />
      <I c="ml-[5px] h-[16px] w-[16px]">
        <path d="M0 10h24M10 0v24" stroke="#555" strokeWidth="1.200" />
        <path d="M12 12l9 5-5 1-1 5z" fill="#555" />
      </I>
      <div className="ml-[3px] text-[13.500px] leading-[13px]">
        <div>X: &nbsp;&nbsp;&nbsp;43.2</div>
        <div>Y: 173.0</div>
      </div>
      <div className="ml-auto flex h-[25px] w-[50px] items-center justify-end rounded-[3px] border-2 border-[#d6d6d6] bg-white pr-[2px] text-[#777]">24</div>
      <div className="ml-[6px]"><CircleNav /></div>
      <div className="ml-[8px]"><CircleNav end /></div>
      <div className="ml-[6px] h-[26px] w-px bg-[#d4d4d4]" />
      <div className="ml-[7px]"><CircleArrow dir="l" /></div>
      <div className="ml-[8px]"><CircleArrow dir="r" off /></div>
      <div className="ml-[54px] flex h-[26px]"><Grip /></div>
      <Page1 c="ml-[7px] h-[24px] w-[17px]" />
      <div className="ml-[8px] flex h-[30px] w-[28px] flex-col items-center justify-center gap-[2px] rounded-[2px] border border-[#b7a263] bg-linear-to-b from-[#f6e3b0] to-[#ffe797]">
        <div className="h-[11px] w-[16px] border border-[#808080] bg-white" />
        <svg viewBox="0 0 16 11" className="h-[11px] w-[16px]"><path d="M.5.5h10l5 5v5H.5z" fill="#fff" stroke="#808080" /><path d="M10 .5l5.500 5.500H10z" fill="#555" /></svg>
      </div>
      <div className="ml-[4px] flex gap-[1px]">
        <Page1 c="h-[20px] w-[12px]" />
        <Page1 c="h-[20px] w-[12px]" />
      </div>
      <div className="ml-[5px] grid grid-cols-2 gap-[1px]">
        <div className="h-[11px] w-[11px] border border-[#808080]" />
        <div className="h-[11px] w-[11px] border border-[#808080]" />
        <Page1 c="h-[11px] w-[11px]" />
        <Page1 c="h-[11px] w-[11px]" />
      </div>
      <div className="ml-[4px] flex h-[26px]"><Grip /></div>
      <Combo text="137.75%" w="w-[85px] ml-[4px]" c="text-[16px]" h="h-[25px]" />
      <div className="ml-[6px] h-[26px] w-px bg-[#d4d4d4]" />
      <div className="ml-[7px]"><CircleSign /></div>
      <div className="relative ml-[6px] flex h-[25px] w-[124px] items-center">
        <div className="h-px w-full bg-[#888]" />
        <div className="absolute left-[62px] top-0 h-[25px] w-[9px] rounded-[2px] border border-[#999] bg-[#fafafa]" />
      </div>
      <div className="ml-[8px]"><CircleSign plus /></div>
      <div className="ml-[6px] flex h-[26px]"><Grip /></div>
      <div className="ml-[5px] h-[20px] w-[20px] rounded-[1px] border border-[#9cc4ea] bg-white">
        <div className="h-[3px] bg-[#9cc4ea]" />
      </div>
      <Caret c="ml-[9px] opacity-50" />
    </div>
  );
}

function PropRow({ label, value, dim }: { label: string; value: ReactNode; dim?: boolean }) {
  return (
    <div className="flex h-[28px] border-b border-[#e2e2e2]">
      <div className="flex w-[104px] shrink-0 items-center justify-end border-r border-[#e2e2e2] pr-[3px] text-[#767676]">{label}</div>
      <div className={`flex items-center gap-[4px] pl-[3px] ${dim ? "text-[#9a9a9a]" : ""}`}>{value}</div>
    </div>
  );
}

function Section({ label, h }: { label: string; h: string }) {
  return (
    <div className={`flex items-center gap-[5px] border-b border-[#e2e2e2] bg-linear-to-b from-[#f4f4f4] to-[#ececec] pl-[3px] font-semibold text-[#555] ${h}`}>
      <svg viewBox="0 0 6 6" className="h-[6px] w-[6px]"><path d="M6 0v6H0z" fill="#333" /></svg>
      <span>{label}</span>
    </div>
  );
}

function PropsPanel() {
  return (
    <div className="flex w-[291px] shrink-0 flex-col rounded-t-[2px] bg-[#f5f5f5] pb-[3px]">
      <div className="flex h-[30px] shrink-0 items-center justify-between bg-linear-to-b from-[#eeeeee] to-[#f7f7f7] pl-[6px] pr-[6px]">
        <span>文本 属性</span>
        <I c="mb-[6px] h-[10px] w-[10px]">
          <path d="M2 2l20 20M22 2L2 22" stroke="#222" strokeWidth="2" />
        </I>
      </div>
      <div className="mx-[4px] flex-1 border border-[#c9c9c9] bg-white">
        <Section label="样式" h="h-[25px]" />
        <PropRow dim label="填充颜色" value={<><div className="h-[24px] w-[24px] rounded-[2px] bg-[#808080]" /><span>rgb: 0, 0, 0</span></>} />
        <PropRow dim label="线条颜色" value={<><div className="relative h-[19px] w-[19px] rounded-[2px] border border-[#d4d4d4] bg-white"><span className="absolute -right-[4px] top-[1px] text-[13px] leading-none text-[#aaa]">×</span></div><span className="ml-[3px]">无</span></>} />
        <PropRow label="边框宽度" value={<span>— 1 pt</span>} />
        <PropRow label="渲染模式" value={<span>填充</span>} />
        <PropRow label="字体" value={<span>宋体</span>} />
        <PropRow label="字体大小" value={<span>10.5 pt</span>} />
        <Section label="字体详细信息" h="h-[24px]" />
        <PropRow label="名称" value={<span>SimSun</span>} />
        <PropRow label="嵌入" value={<span className="font-bold">是</span>} />
        <PropRow label="类型" value={<span>True Type (CID)</span>} />
        <PropRow label="编码" value={<span>Identity-H</span>} />
        <PropRow label="实际字体" value={<span>SimSun</span>} />
        <PropRow label="实际字体类型" value={<span>True Type (CID)</span>} />
        <PropRow label="对象编号" value={<span className="font-bold">2</span>} />
      </div>
    </div>
  );
}

type MenuEntry =
  | "-"
  | { icon?: ReactNode; text: ReactNode; key?: string; sub?: boolean; check?: boolean; dim?: boolean; flush?: boolean };

const U = ({ k }: { k: string }) => <u className="underline-offset-2">{k}</u>;

function CopyIcon({ rtf }: { rtf?: boolean }) {
  return (
    <I c="h-[24px] w-[24px]">
      <path d="M1 1h9l3 3v11H1z" fill="#fff" stroke="#888" />
      <path d="M3 5h6M3 8h7M3 11h5" stroke="#aaa" />
      <path d="M10 8h8l5 5v10H10z" fill="#fff" stroke={BLUE} />
      <path d="M18 8l5 5h-5z" fill={BLUE} />
      {rtf ? <rect x="10" y="14" width="13" height="5" fill="#f9a840" /> : <path d="M13 15h7M13 18h7M13 21h7" stroke={BLUE} />}
    </I>
  );
}

const menuItems: MenuEntry[] = [
  { icon: <CopyIcon />, text: <>复制(<U k="C" />)</>, key: "Ctrl+C" },
  { icon: <CopyIcon rtf />, text: "按富文本复制" },
  { icon: <Clipboard />, text: <>粘贴(<U k="P" />)</>, key: "Shift+Insert" },
  "-",
  { icon: <HighlightT />, text: "高亮文本" },
  { icon: <UnderT />, text: "下划线文本" },
  { icon: <StrikeT />, text: "划去文本" },
  "-",
  { icon: <I c="h-[24px] w-[24px]"><path d="M3 1h12v20l-6-5-6 5z" fill={BLUE} /><PlusBadge /></I>, text: "新增书签", key: "Ctrl+Shift+B" },
  { icon: <Note />, text: "新增固顶笔记", sub: true },
  { icon: <I c="h-[24px] w-[24px]"><path d="M3 14a3 3 0 0 1 0-4l5-4a3 3 0 0 1 4 0" stroke="#f5a030" strokeWidth="2.500" /><path d="M10 10l6-6a3 3 0 0 1 5 4l-3 3" stroke="#999" strokeWidth="2.500" /><path d="M5 19l7-7" stroke="#f5a030" strokeWidth="2.500" /><PlusBadge /></I>, text: "新增链接...", sub: true },
  "-",
  { icon: <I c="h-[24px] w-[24px]"><path d="M1 2h17l4 4v13H1z" fill="#bcdcf5" stroke="#999" /><circle cx="6" cy="7" r="2" fill="#ffd84a" /><path d="M1 17l7-6 5 4 4-3 3 4v3H1z" fill="#86b850" /><PlusBadge /></I>, text: "添加图像..." },
  { icon: <I c="h-[24px] w-[24px]"><rect x="1" y="1" width="21" height="21" fill="#fff" stroke={BLUE} /><path d="M4 4h5v5H4zM13 4h5v5h-5zM4 13h5v5H4z" stroke="#666" strokeWidth="1.200" /><path d="M11 11h2M11 14h1" stroke="#666" /><PlusBadge /></I>, text: "添加条码..." },
  "-",
  { icon: <Hand c="h-[24px] w-[20px]" />, text: "手形工具" },
  { icon: <Camera />, text: "快照工具" },
  { icon: <SelectText c="h-[20px] w-[26px]" />, text: "选择文本", check: true },
  { icon: <ZoomTool />, text: "缩放工具" },
  "-",
  { icon: <I c="h-[24px] w-[24px]"><Paper /><circle cx="18" cy="18" r="5.500" fill={GREEN} /><path d="M16 15l5 3-5 3z" fill="#fff" /></I>, text: "前往", sub: true },
  "-",
  { icon: <Printer />, text: <>打印(<U k="P" />)...</>, key: "Ctrl+P" },
  "-",
  {
    flush: true,
    text: (
      <span className="flex items-center gap-[5px]">
        Internet 搜索引擎:
        <span className="flex h-[15px] w-[16px] items-center justify-center rounded-[2px] bg-[#4a86e8] text-[12px] leading-none text-white">8</span>
        Google
      </span>
    ),
    sub: true,
  },
  { icon: <DocFind />, text: <>查找(<U k="F" />)...</>, key: "Ctrl+F" },
  { icon: <FolderFind />, text: <>搜索(<U k="S" />)...</>, key: "Ctrl+Shift+F" },
  "-",
  { icon: <I c="h-[24px] w-[24px]"><path d="M9 1h12v13M6 4h12v13" stroke="#999" strokeWidth="1.400" /><rect x="2.500" y="7.500" width="14" height="14" fill="#fff" stroke="#999" strokeWidth="1.800" /><path d="M6 14l3 3 5-6" stroke={BLUE} strokeWidth="2" /></I>, text: <>全选(<U k="A" />)</>, key: "Ctrl+A" },
  "-",
  { icon: <DocExport />, text: "导出", sub: true },
  "-",
  { icon: <I c="h-[24px] w-[24px]"><rect x="0" y="3" width="10" height="11" fill="#7dbcf0" /><path d="M2 5h6v2M5 5v7" stroke="#444" strokeWidth="1.400" /><path d="M11 1v20" stroke="#555" /><path d="M14 8h9v15l-4.500-3.500L14 23z" fill={BLUE} /></I>, text: "生成书签时使用所选的文本样式..." },
  "-",
  { icon: <Sound off />, text: "朗读所选文本" },
  { icon: <I c="h-[24px] w-[24px] opacity-50"><path d="M1 8h5l6-5v18l-6-5H1z" fill="#bbb" /><rect x="11" y="13" width="9" height="9" fill="#f58a70" /></I>, text: "停止朗读", dim: true },
];

function ContextMenu() {
  return (
    <div className="absolute left-[501px] top-[188px] z-10 h-[836px] w-[424px] rounded-[4px] border-2 border-[#8b8b8b] bg-[#f6f6f6] pt-[3px] shadow-[1px_2px_4px_rgba(0,0,0,.5)]">
      {menuItems.map((m, i) =>
        m === "-" ? (
          <div key={i} className="mx-[5px] my-[3px] h-px bg-[#d4d4d4]" />
        ) : (
          <div key={i} className={`relative flex h-[30px] items-center whitespace-nowrap ${m.dim ? "text-[#8a8a8a]" : ""}`}>
            {m.check && (
              <svg viewBox="0 0 12 10" className="absolute left-[7px] top-[9px] h-[10px] w-[12px]">
                <path d="M1 5l4 4 6-8" stroke="#555" strokeWidth="2" fill="none" />
              </svg>
            )}
            {m.flush ? (
              <div className="pl-[22px]">{m.text}</div>
            ) : (
              <>
                <div className="ml-[21px] flex w-[24px] justify-center">{m.icon}</div>
                <div className="ml-[5px]">{m.text}</div>
              </>
            )}
            {m.key && <div className="absolute right-[18px] tracking-[0.4px]">{m.key}</div>}
            {m.sub && (
              <svg viewBox="0 0 4 8" className="absolute right-[14px] h-[8px] w-[4px]">
                <path d="M0 0v8l4-4z" fill="#555" />
              </svg>
            )}
          </div>
        ),
      )}
    </div>
  );
}

function Watermark() {
  return (
    <div className="pointer-events-none absolute inset-0 z-[5] mix-blend-multiply">
      <svg viewBox="0 0 112 113" className="absolute left-[1249px] top-[750px] h-[113px] w-[112px]">
        <path d="M47 0l27 26-26 22L24 21z" fill="#ffa88a" />
        <path d="M76 26l35 30-34 31-28-39z" fill="#a8e26e" />
        <path d="M48 49l29 39-32 25-25-42z" fill="#ffdf6e" />
        <path d="M23 22l24 26-27 21L0 40z" fill="#6cc0ff" />
      </svg>
      <svg viewBox="0 0 86 76" className="absolute left-[1373px] top-[782px] h-[76px] w-[86px]">
        <path d="M35 0C52 0 66 14 72 30C74 36 75 42 75 48C64 44 54 52 52 62C51 68 52 72 54 75C46 76 38 76 30 72C24 69 22 60 14 56C5 52 0 48 0 42C0 18 16 0 35 0Z" fill="#6e6e6e" />
        <path d="M61 19C68 12 78 12 86 18C78 24 68 24 61 19Z" fill="#6e6e6e" />
      </svg>
      <svg viewBox="0 0 80 82" className="absolute left-[1245px] top-[875px] h-[82px] w-[80px]">
        <path d="M8 17A40 41 0 0 1 74 20L42 20A21 21 0 0 0 21 33Z" fill="#f49a90" />
        <path d="M78 25A40 41 0 0 1 40 82L57 54A21 21 0 0 0 58 25Z" fill="#ffd870" />
        <path d="M5 21L21 52A21 21 0 0 0 50 60L34 81A40 41 0 0 1 5 21Z" fill="#90d0a0" />
        <circle cx="40" cy="41" r="14" fill="#9abcf8" />
      </svg>
      <svg viewBox="14 10 68 80" className="absolute left-[1337px] top-[860px] h-[100px] w-[96px]">
        <g transform="rotate(-32 48 50)" fill="#bddf98">
          <path d="M27 33a21 20 0 0 1 42 0z" />
          <rect x="27" y="36" width="42" height="36" rx="4" />
          <rect x="14" y="36" width="10" height="30" rx="5" />
          <rect x="72" y="36" width="10" height="30" rx="5" />
          <rect x="36" y="68" width="10" height="26" rx="5" />
          <rect x="52" y="68" width="10" height="26" rx="5" />
          <path d="M36 15l-5-9M60 15l5-9" stroke="#bddf98" strokeWidth="2" />
          <circle cx="39" cy="24" r="2.500" fill="#fff" />
          <circle cx="57" cy="24" r="2.500" fill="#fff" />
        </g>
      </svg>
      <div className="absolute left-[1479px] top-[742px] whitespace-nowrap font-[Noto_Sans_CJK_SC,sans-serif] text-[74px] font-black leading-[106px] tracking-[28px] text-[#6e6e6e]">枫音应用</div>
      <div className="absolute left-[1470px] top-[856px] whitespace-nowrap font-[Inter,sans-serif] text-[88px] font-black leading-[106px] tracking-[-6px] text-[#6e6e6e]">fy6b.com</div>
    </div>
  );
}

function Sogou() {
  return (
    <div className="absolute bottom-0 right-0 z-20 flex h-[29px] w-[127px] items-center border-l border-t border-[#c4d8ee] bg-white pl-[12px] text-[18px] font-bold leading-none text-[#1fae5a]">
      <span>中</span>
      <svg viewBox="0 0 18 18" className="ml-[13px] h-[18px] w-[18px]">
        <circle cx="9" cy="9" r="9" fill="#1fae5a" />
        <circle cx="6" cy="7" r="1.500" fill="#fff" />
        <circle cx="12" cy="7" r="1.500" fill="#fff" />
        <path d="M5 11a4 4 0 0 0 8 0z" fill="#fff" />
      </svg>
      <span className="ml-[12px]">简</span>
      <div className="ml-[14px] grid grid-cols-2 gap-[1px]">
        <div className="h-[8px] w-[8px] rounded-[3px] bg-[#1fae5a]" />
        <div className="h-[8px] w-[8px] rounded-[3px] bg-[#1fae5a]" />
        <div className="h-[8px] w-[8px] rounded-[3px] bg-[#1fae5a]" />
        <div className="h-[8px] w-[8px] rounded-[3px] bg-[#1fae5a]" />
      </div>
      <svg viewBox="0 0 40 34" className="absolute -left-[35px] bottom-0 h-[34px] w-[40px]">
        <path d="M3 7L32 0l8 26-29 8z" fill="#f4561d" />
        <path d="M28 9c-6-1-14 0-14 3s11 2 12 7-9 7-15 6" stroke="#fff" strokeWidth="4.500" fill="none" />
      </svg>
    </div>
  );
}

export default function App() {
  return (
    <div className="relative flex h-[1027px] w-[1920px] flex-col overflow-hidden bg-[#f6f6f6] font-[Noto_Sans,Noto_Sans_CJK_SC,sans-serif] text-[15px] text-[#1c1c1c]">
      <TopBars />
      <Ribbon />
      <PropBar />
      <div className="flex min-h-0 flex-1 bg-[#7d7d7d] bg-[radial-gradient(#8c8c8c_0.8px,transparent_1px)] bg-[length:3px_3px]">
        <div className="flex w-[1627px] shrink-0 flex-col">
          <TabBar />
          <div className="flex min-h-0 flex-1 pt-[3px]">
            <div className="w-[3px] shrink-0 bg-[#ffdf8a]" />
            <div className="w-[2px] shrink-0" />
            <BookmarksPanel />
            <div className="flex w-[9px] shrink-0 items-center justify-center">
              <div className="flex h-[70px] w-[7px] items-center justify-center rounded-[3px] bg-[#f0f0f0]">
                <svg viewBox="0 0 4 8" className="h-[8px] w-[4px]"><path d="M4 0v8L0 4z" fill="#333" /></svg>
              </div>
            </div>
            <div className="flex w-[1401px] shrink-0 flex-col border-[3px] border-[#fbe08f]">
              <div className="flex min-h-0 flex-1 border-t border-[#444]">
                <div className="w-[5px] shrink-0 bg-[#4a4a4a]" />
                <DocPage />
                <div className="w-[4px] shrink-0 bg-[#4a4a4a]" />
                <ScrollBar />
              </div>
              <StatusBar />
            </div>
            <div className="flex w-[14px] shrink-0 items-center justify-center">
              <div className="flex h-[70px] w-[7px] items-center justify-center rounded-[3px] bg-[#f0f0f0]">
                <svg viewBox="0 0 4 8" className="h-[8px] w-[4px]"><path d="M0 0v8l4-4z" fill="#333" /></svg>
              </div>
            </div>
          </div>
        </div>
        <div className="flex pt-[2px]">
          <PropsPanel />
        </div>
      </div>
      <div className="absolute left-[2px] top-[743px] flex h-[62px] w-[8px] flex-col justify-end rounded-[3px] border border-[#666] bg-white">
        <div className="h-[30px] bg-[#6cc04a]" />
      </div>
      <Watermark />
      <ContextMenu />
      <Sogou />
    </div>
  );
}
